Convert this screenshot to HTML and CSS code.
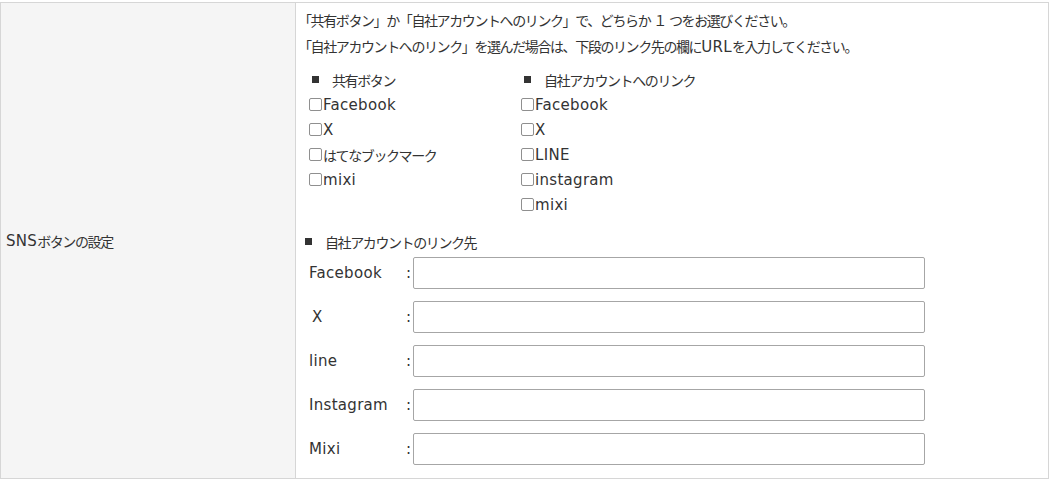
FILE: index.html
```html
<!DOCTYPE html>
<html lang="ja">
<head>
<meta charset="utf-8">
<title>SNSボタンの設定</title>
<link rel="stylesheet" href="styles.css">
</head>
<body>
<div class="settings">
  <div class="th"><span class="en">SNS</span>ボタンの設定</div>
  <div class="td">
    <p class="note">「共有ボタン」か「自社アカウントへのリンク」で、どちらか １ つをお選びください。</p>
    <p class="note">「自社アカウントへのリンク」を選んだ場合は、下段のリンク先の欄に<span class="en">URL</span>を入力してください。</p>
    <div class="choices">
      <div class="group">
        <div class="heading">共有ボタン</div>
        <label class="opt"><input type="checkbox" class="check"><span class="en">Facebook</span></label>
        <label class="opt"><input type="checkbox" class="check"><span class="en">X</span></label>
        <label class="opt"><input type="checkbox" class="check"><span>はてなブックマーク</span></label>
        <label class="opt"><input type="checkbox" class="check"><span class="en">mixi</span></label>
      </div>
      <div class="group">
        <div class="heading">自社アカウントへのリンク</div>
        <label class="opt"><input type="checkbox" class="check"><span class="en">Facebook</span></label>
        <label class="opt"><input type="checkbox" class="check"><span class="en">X</span></label>
        <label class="opt"><input type="checkbox" class="check"><span class="en">LINE</span></label>
        <label class="opt"><input type="checkbox" class="check"><span class="en">instagram</span></label>
        <label class="opt"><input type="checkbox" class="check"><span class="en">mixi</span></label>
      </div>
    </div>
    <div class="heading heading-links">自社アカウントのリンク先</div>
    <div class="fields">
      <div class="field"><span class="field-label">Facebook</span><span class="colon">:</span><input type="text" class="input"></div>
      <div class="field"><span class="field-label field-label-x">X</span><span class="colon">:</span><input type="text" class="input"></div>
      <div class="field"><span class="field-label">line</span><span class="colon">:</span><input type="text" class="input"></div>
      <div class="field"><span class="field-label">Instagram</span><span class="colon">:</span><input type="text" class="input"></div>
      <div class="field"><span class="field-label">Mixi</span><span class="colon">:</span><input type="text" class="input"></div>
    </div>
  </div>
</div>
</body>
</html>
```
FILE: styles.css
```css
html, body {
  margin: 0;
  background: #fff;
}
body {
  padding-top: 2px;
  font-family: "DejaVu Sans", "Noto Sans CJK JP", sans-serif;
  font-size: 14px;
  letter-spacing: -1.4px;
  color: #333;
}
.en {
  font-family: "DejaVu Sans", sans-serif;
  font-size: 15px;
  letter-spacing: 0.3px;
}
.settings {
  display: flex;
  width: 1049px;
  box-sizing: border-box;
  border: 1px solid #d6d6d6;
}
.th {
  width: 295px;
  flex: none;
  box-sizing: border-box;
  border-right: 1px solid #d6d6d6;
  background: #f5f5f5;
  display: flex;
  align-items: center;
  padding-left: 5px;
}
.td {
  flex: 1;
  padding: 5px 0 13px 9px;
}
.note {
  margin: 0 0 0 -7px;
  line-height: 26px;
  white-space: nowrap;
}
.choices {
  display: flex;
  margin: 7px 0 0 4px;
}
.group {
  width: 212px;
}
.heading {
  display: flex;
  align-items: center;
  height: 25px;
}
.heading::before {
  content: "";
  width: 7px;
  height: 7px;
  background: #333;
  margin-right: 13px;
}
.group .heading {
  margin-left: 3px;
}
.heading-links {
  margin-top: 12px;
}
.opt {
  display: flex;
  align-items: center;
  height: 25px;
}
.check {
  appearance: none;
  -webkit-appearance: none;
  width: 13px;
  height: 13px;
  margin: 0 1px 0 0;
  box-sizing: border-box;
  border: 1px solid #8f8f8f;
  border-radius: 2px;
  background: #fff;
}
.fields {
  margin: 3px 0 0 4px;
  display: flex;
  flex-direction: column;
  gap: 12px;
}
.field {
  display: flex;
  align-items: center;
  height: 32px;
}
.field-label {
  width: 97px;
  font-family: "DejaVu Sans", sans-serif;
  font-size: 15px;
  letter-spacing: 0.3px;
}
.field-label-x {
  width: 94px;
  padding-left: 3px;
}
.colon {
  font-family: "DejaVu Sans", sans-serif;
  font-size: 15px;
  letter-spacing: 0;
  width: 5px;
}
.input {
  width: 512px;
  height: 32px;
  margin: 0 0 0 2px;
  box-sizing: border-box;
  border: 1px solid #a6a6a6;
  border-radius: 2px;
  background: #fff;
  padding: 0 4px;
}
```
